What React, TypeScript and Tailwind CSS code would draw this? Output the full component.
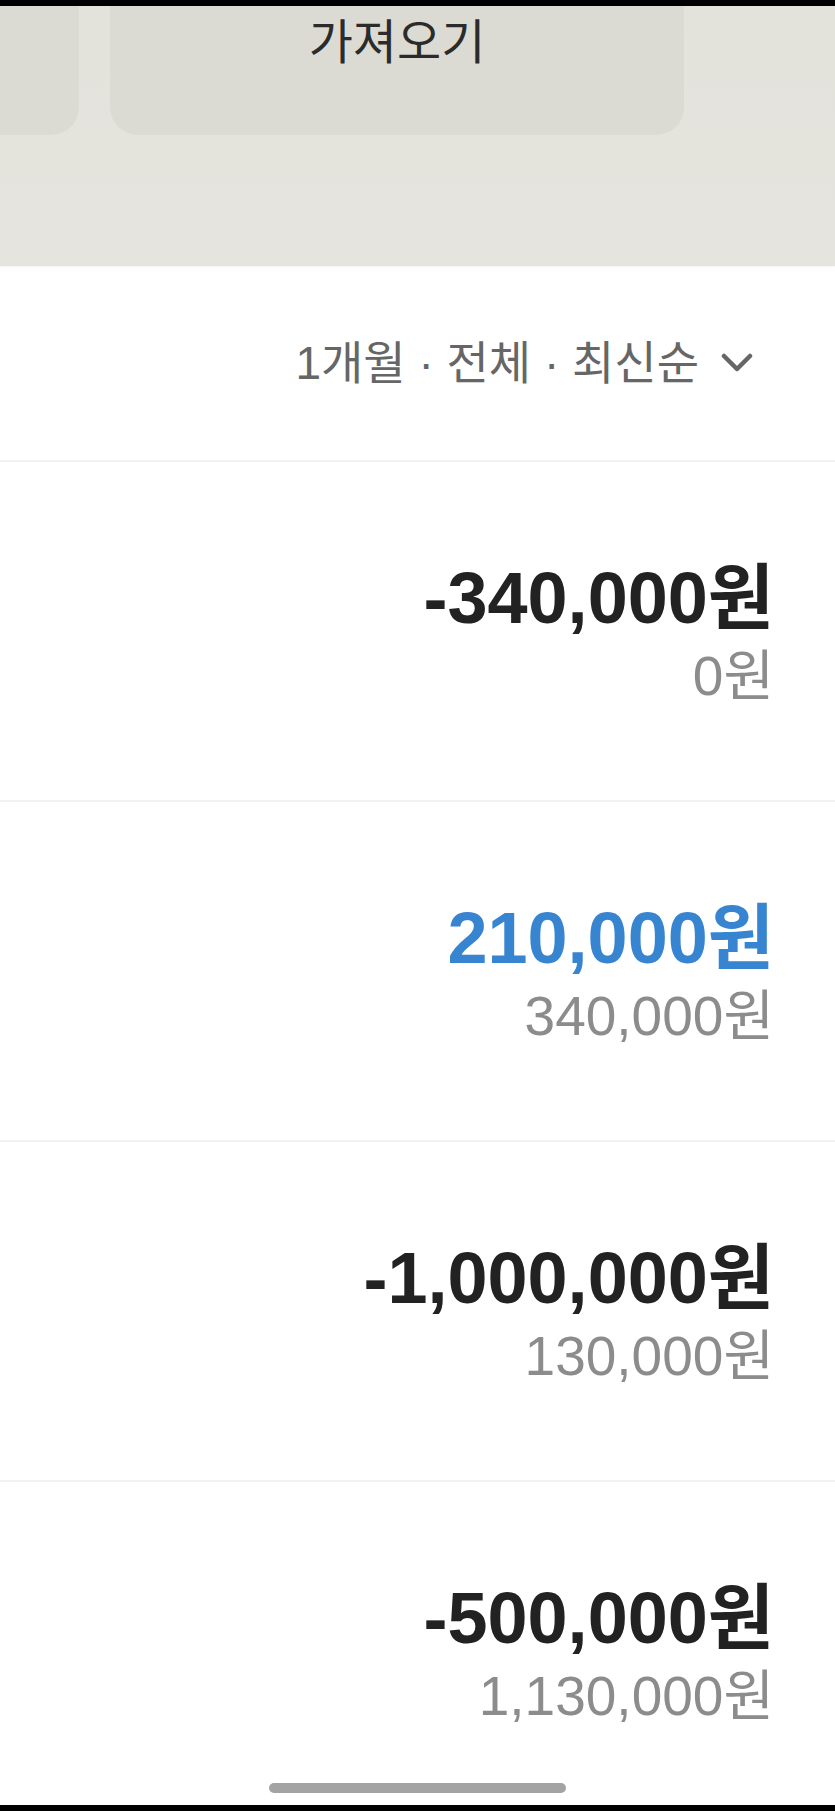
import React from "react";

const rows = [
	{ amount: "-340,000원", balance: "0원", plus: false },
	{ amount: "210,000원", balance: "340,000원", plus: true },
	{ amount: "-1,000,000원", balance: "130,000원", plus: false },
	{ amount: "-500,000원", balance: "1,130,000원", plus: false },
];

export default function App() {
	return (
		<div className="relative h-[1811px] w-full overflow-hidden bg-white font-['Liberation_Sans','Noto_Sans_CJK_KR',sans-serif]">
			{/* top bar */}
			<div className="h-[6px] bg-black" />

			{/* import cards */}
			<div className="h-[260px] bg-gradient-to-b from-[#e3e2db] to-[#e5e4de] shadow-[0_1px_2px_rgba(0,0,0,0.06)]">
				<div className="flex gap-[31px]">
					<div className="h-[129px] w-[79px] rounded-br-[28px] bg-[#dcdbd3]" />
					<div className="flex h-[129px] w-[574px] justify-center rounded-b-[28px] bg-[#dcdbd3]">
						<span className="mt-[6px] text-[48px] leading-[52px] text-[#2b2b2b] font-['Noto_Sans_CJK_KR',sans-serif]">
							가져오기
						</span>
					</div>
				</div>
			</div>

			{/* filter */}
			<div className="flex h-[194px] items-center justify-end gap-[22px] pr-[82px]">
				<span className="text-[46px] leading-none text-[#666666]">
					1개월 · 전체 · 최신순
				</span>
				<svg width="32" height="20" viewBox="0 0 32 20" fill="none">
					<polyline
						points="3,3 16,16 29,3"
						stroke="#666666"
						strokeWidth="4.5"
						strokeLinecap="round"
						strokeLinejoin="round"
					/>
				</svg>
			</div>

			{/* list */}
			<div>
				{rows.map((r) => (
					<div
						key={r.amount}
						className="flex h-[340px] flex-col items-end border-t-2 border-[#f1f1f1] pt-[97px] pr-[61px]"
					>
						<div
							className={`text-[72px] font-bold leading-[78px] ${
								r.plus ? "text-[#3784d0]" : "text-[#222222]"
							}`}
						>
							{r.amount}
						</div>
						<div className="text-[55px] leading-[78px] text-[#8c8c8c]">
							{r.balance}
						</div>
					</div>
				))}
			</div>

			{/* home indicator */}
			<div className="absolute bottom-[18px] left-[269px] h-[10px] w-[297px] rounded-full bg-[#a3a3a3]" />
			<div className="absolute bottom-0 left-0 h-[6px] w-full bg-black" />
		</div>
	);
}
